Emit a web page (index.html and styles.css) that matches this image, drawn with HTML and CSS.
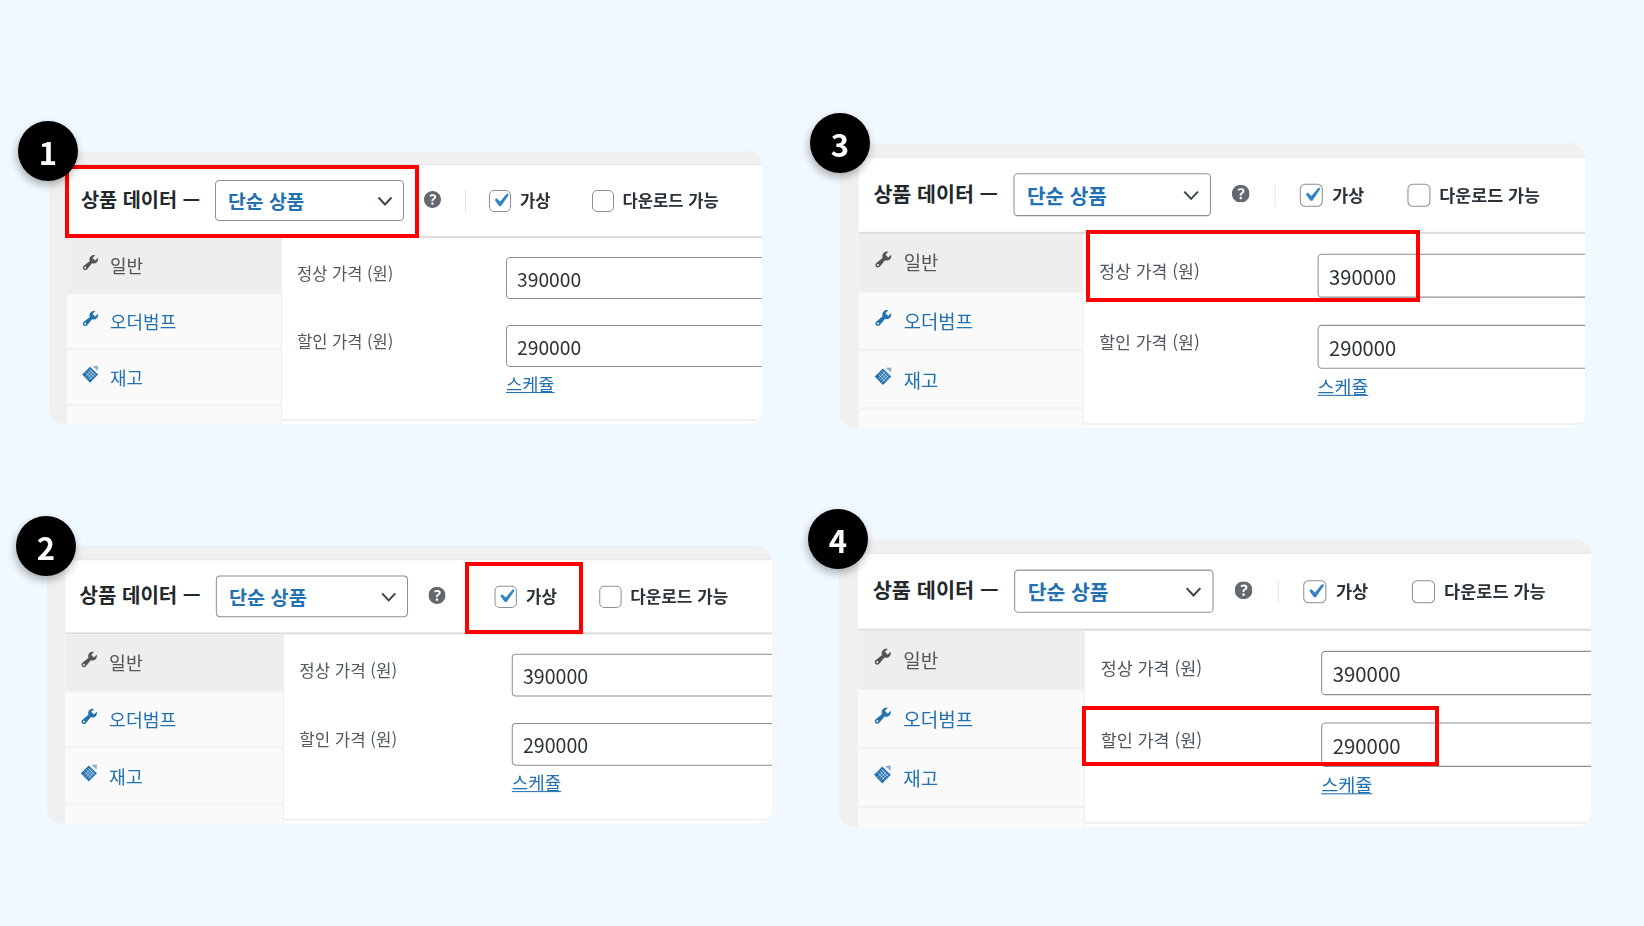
FILE: index.html
```html
<!DOCTYPE html>
<html lang="ko">
<head>
<meta charset="utf-8">
<title>상품 데이터 안내</title>
<link rel="stylesheet" href="styles.css">
</head>
<body>
<svg class="sprites" aria-hidden="true">
  <symbol id="i-chev" viewBox="0 0 16 10"><path d="M1.5 1.5 8 8.500l6.500-7"/></symbol>
  <symbol id="i-help" viewBox="3 3 14 14"><path d="M17 10c0-3.870-3.140-7-7-7-3.870 0-7 3.130-7 7 0 3.860 3.130 7 7 7 3.860 0 7-3.140 7-7zm-6.300 1.480H9.140v-.43c0-.38.08-.7.24-.98s.46-.57.88-.89c.41-.29.68-.53.81-.71.14-.18.2-.39.2-.62 0-.25-.09-.44-.28-.58-.19-.13-.45-.19-.79-.19-.58 0-1.250.19-2 .57l-.64-1.280c.87-.49 1.800-.74 2.770-.74.81 0 1.450.2 1.920.58.48.39.71.91.71 1.550 0 .43-.09.8-.29 1.110-.19.32-.57.67-1.130 1.060-.38.28-.61.49-.71.63-.1.15-.13.34-.13.57v.35zm-1.470 2.740c-.18-.17-.27-.42-.27-.73 0-.33.08-.58.26-.75s.43-.25.77-.25c.32 0 .57.09.75.26s.27.42.27.74c0 .3-.09.55-.27.72-.18.18-.43.27-.75.27-.33 0-.58-.09-.76-.26z"/></symbol>
  <symbol id="i-check" viewBox="0 0 20 20"><path d="M14.830 4.890l1.340.94-5.810 8.380H9.020L5.780 9.670l1.340-1.250 2.570 2.400z"/></symbol>
  <symbol id="i-wrench" viewBox="0 0 20 20"><path d="M16.680 9.770c-1.340 1.340-3.300 1.670-4.950.99l-5.410 6.520c-.99.99-2.590.99-3.580 0s-.99-2.590 0-3.570l6.520-5.420c-.68-1.650-.35-3.610.99-4.950 1.280-1.280 3.120-1.620 4.720-1.060l-2.890 2.890 2.820 2.820 2.860-2.870c.53 1.580.18 3.390-1.080 4.670zM3.810 16.210c.4.39 1.040.39 1.430 0 .4-.4.4-1.040 0-1.430-.39-.4-1.030-.4-1.430 0-.39.39-.39 1.030 0 1.430z"/></symbol>
  <symbol id="i-stock" viewBox="0 0 20 20">
    <path d="M9.500 1.800 18 10 9.500 18.600 1.300 10z"/>
    <path d="M12.500 1.200 18 .8l-.3 5.400z" opacity=".55"/>
    <path d="M5 7.800l6.800 7M6.800 6l6.800 7M8.500 4.300l6.800 7M6.800 13.900l6.800-7M5 12.200l6.800-7M8.500 15.600l6.800-7" fill="none" stroke="#fafafa" stroke-width=".6"/>
  </symbol>
</svg>

<main class="stage">

  <section class="card card-1">
    <div class="panel">
      <header class="head">
        <strong class="title">상품 데이터 —</strong>
        <div class="select"><span>단순 상품</span><svg class="chev"><use href="#i-chev"/></svg></div>
        <svg class="help"><use href="#i-help"/></svg>
        <i class="divider"></i>
        <span class="check"><svg><use href="#i-check"/></svg></span>
        <span class="opt">가상</span>
        <span class="check second"></span>
        <span class="opt">다운로드 가능</span>
      </header>
      <div class="body">
        <nav class="side">
          <a class="tab active"><svg class="ico"><use href="#i-wrench"/></svg>일반</a>
          <a class="tab"><svg class="ico"><use href="#i-wrench"/></svg>오더범프</a>
          <a class="tab"><svg class="ico"><use href="#i-stock"/></svg>재고</a>
        </nav>
        <div class="pricing">
          <div class="field"><label>정상 가격 (원)</label><input value="390000" readonly></div>
          <div class="field"><label>할인 가격 (원)</label><input value="290000" readonly></div>
          <a class="sched">스케쥴</a>
        </div>
      </div>
    </div>
  </section>

  <section class="card card-2">
    <div class="panel">
      <header class="head">
        <strong class="title">상품 데이터 —</strong>
        <div class="select"><span>단순 상품</span><svg class="chev"><use href="#i-chev"/></svg></div>
        <svg class="help"><use href="#i-help"/></svg>
        <i class="divider"></i>
        <span class="check"><svg><use href="#i-check"/></svg></span>
        <span class="opt">가상</span>
        <span class="check second"></span>
        <span class="opt">다운로드 가능</span>
      </header>
      <div class="body">
        <nav class="side">
          <a class="tab active"><svg class="ico"><use href="#i-wrench"/></svg>일반</a>
          <a class="tab"><svg class="ico"><use href="#i-wrench"/></svg>오더범프</a>
          <a class="tab"><svg class="ico"><use href="#i-stock"/></svg>재고</a>
        </nav>
        <div class="pricing">
          <div class="field"><label>정상 가격 (원)</label><input value="390000" readonly></div>
          <div class="field"><label>할인 가격 (원)</label><input value="290000" readonly></div>
          <a class="sched">스케쥴</a>
        </div>
      </div>
    </div>
  </section>

  <section class="card card-3">
    <div class="panel">
      <header class="head">
        <strong class="title">상품 데이터 —</strong>
        <div class="select"><span>단순 상품</span><svg class="chev"><use href="#i-chev"/></svg></div>
        <svg class="help"><use href="#i-help"/></svg>
        <i class="divider"></i>
        <span class="check"><svg><use href="#i-check"/></svg></span>
        <span class="opt">가상</span>
        <span class="check second"></span>
        <span class="opt">다운로드 가능</span>
      </header>
      <div class="body">
        <nav class="side">
          <a class="tab active"><svg class="ico"><use href="#i-wrench"/></svg>일반</a>
          <a class="tab"><svg class="ico"><use href="#i-wrench"/></svg>오더범프</a>
          <a class="tab"><svg class="ico"><use href="#i-stock"/></svg>재고</a>
        </nav>
        <div class="pricing">
          <div class="field"><label>정상 가격 (원)</label><input value="390000" readonly></div>
          <div class="field"><label>할인 가격 (원)</label><input value="290000" readonly></div>
          <a class="sched">스케쥴</a>
        </div>
      </div>
    </div>
  </section>

  <section class="card card-4">
    <div class="panel">
      <header class="head">
        <strong class="title">상품 데이터 —</strong>
        <div class="select"><span>단순 상품</span><svg class="chev"><use href="#i-chev"/></svg></div>
        <svg class="help"><use href="#i-help"/></svg>
        <i class="divider"></i>
        <span class="check"><svg><use href="#i-check"/></svg></span>
        <span class="opt">가상</span>
        <span class="check second"></span>
        <span class="opt">다운로드 가능</span>
      </header>
      <div class="body">
        <nav class="side">
          <a class="tab active"><svg class="ico"><use href="#i-wrench"/></svg>일반</a>
          <a class="tab"><svg class="ico"><use href="#i-wrench"/></svg>오더범프</a>
          <a class="tab"><svg class="ico"><use href="#i-stock"/></svg>재고</a>
        </nav>
        <div class="pricing">
          <div class="field"><label>정상 가격 (원)</label><input value="390000" readonly></div>
          <div class="field"><label>할인 가격 (원)</label><input value="290000" readonly></div>
          <a class="sched">스케쥴</a>
        </div>
      </div>
    </div>
  </section>

  <div class="mark mark-1"></div>
  <div class="mark mark-2"></div>
  <div class="mark mark-3"></div>
  <div class="mark mark-4"></div>

  <div class="badge badge-1">1</div>
  <div class="badge badge-2">2</div>
  <div class="badge badge-3">3</div>
  <div class="badge badge-4">4</div>
</main>
</body>
</html>
```

FILE: styles.css
```css
* { box-sizing: border-box; }

html, body { margin: 0; height: 100%; }

body {
  background: #f0f9ff;
  font-family: "Noto Sans CJK KR", "Noto Sans", sans-serif;
  color: #2c3338;
  overflow: hidden;
}

.sprites { display: none; }

.stage { position: relative; width: 1644px; height: 926px; filter: blur(.3px); }

/* The four cards sit on a free canvas, each at its own size. */
.card {
  position: absolute;
  width: 713px;
  height: 273px;
  padding: 13px 0 0 18px;
  background: #f0f0f0;
  border-radius: 15px;
  overflow: hidden;
  transform-origin: 0 0;
}
.card-1 { left: 49px; top: 151px; }
.card-2 { left: 47px; top: 546px; transform: scale(1.017); }
.card-3 { left: 840px; top: 143px; transform: scale(1.045); }
.card-4 { left: 839px; top: 539px; transform: scale(1.055); }

.panel { height: 100%; background: #fff; border-top: 1px solid #e4e4e4; display: flex; flex-direction: column; }

.head {
  flex: none;
  height: 73px;
  display: flex;
  align-items: center;
  padding-left: 14px;
  border-bottom: 2px solid #dcdcdc;
}

.title { flex: none; width: 134px; margin-top: -4px; font-size: 19.700px; font-weight: 700; color: #23282d; white-space: nowrap; }

.select {
  flex: none;
  width: 189px;
  height: 41px;
  display: flex;
  align-items: center;
  justify-content: space-between;
  padding: 0 10px 0 12px;
  border: 1.5px solid #8c8f94;
  border-radius: 4px;
  background: #fff;
  color: #2271b1;
  font-size: 19.300px;
  font-weight: 700;
}

.chev { flex: none; width: 16px; height: 10px; fill: none; stroke: #3c434a; stroke-width: 1.9; }

.help { flex: none; width: 17px; height: 17px; margin: -2px 0 0 20px; fill: #646970; }

.divider { flex: none; width: 1px; height: 22px; margin: 0 23px 0 24px; background: #e2e4e7; }
.card-2 .divider { visibility: hidden; }

.check {
  flex: none;
  width: 22px;
  height: 22px;
  border: 1.5px solid #8c8f94;
  border-radius: 5px;
  background: #fff;
  display: flex;
  align-items: center;
  justify-content: center;
}
.check svg { flex: none; width: 27px; height: 27px; fill: #3582c4; }
.check.second { margin-left: 41px; }

.opt { flex: none; margin: -2px 0 0 9px; font-size: 16.600px; font-weight: 700; color: #2c3338; }

.body { flex: 1; min-height: 0; display: flex; }

.side { flex: none; width: 215px; background: #fafafa; border-right: 1px solid #eee; }

.tab {
  height: 56px;
  display: flex;
  align-items: center;
  padding-left: 14px;
  border-bottom: 2px solid #f1f1f1;
  color: #2271b1;
  font-size: 18px;
}
.tab.active { padding-bottom: 3px; background: #eee; color: #555; border-bottom: 0; }

.ico { flex: none; width: 19px; height: 19px; margin: -5px 10px 0 0; fill: currentColor; }

.pricing {
  flex: 1;
  min-width: 0;
  height: 183px;
  padding: 19px 0 0 15px;
  border-bottom: 2px solid #f0f0f0;
}

.field { display: flex; height: 42px; margin-bottom: 26px; }

.field label { flex: none; width: 209px; font-size: 16.500px; line-height: 33px; color: #50575e; }

.field input {
  flex: none;
  width: 320px;
  height: 42px;
  padding: 1px 0 0 10px;
  border: 1.5px solid #8c8f94;
  border-radius: 4px;
  background: #fff;
  font: 400 19.300px "Noto Sans CJK KR", "Noto Sans", sans-serif;
  color: #2c3338;
  outline: 0;
}

.sched {
  display: block;
  margin: -22px 0 0 209px;
  width: max-content;
  font-size: 17.600px;
  color: #2271b1;
  text-decoration: underline;
}

/* Red call-outs and numbered badges lie over the cards. */
.mark { position: absolute; border: 4.500px solid #f00; }
.mark-1 { left: 65px; top: 165px; width: 354px; height: 73px; }
.mark-2 { left: 465px; top: 562px; width: 118px; height: 72px; }
.mark-3 { left: 1086px; top: 230px; width: 334px; height: 72px; }
.mark-4 { left: 1082px; top: 706px; width: 357px; height: 60px; }

.badge {
  position: absolute;
  width: 60px;
  height: 60px;
  border-radius: 50%;
  background: #000;
  color: #fff;
  font-size: 31px;
  font-weight: 700;
  display: flex;
  align-items: center;
  justify-content: center;
  box-shadow: -1px 4px 8px rgba(0, 0, 0, .3);
}
.badge-1 { left: 18px; top: 121px; }
.badge-2 { left: 16px; top: 516px; }
.badge-3 { left: 810px; top: 113px; }
.badge-4 { left: 808px; top: 509px; }
```
